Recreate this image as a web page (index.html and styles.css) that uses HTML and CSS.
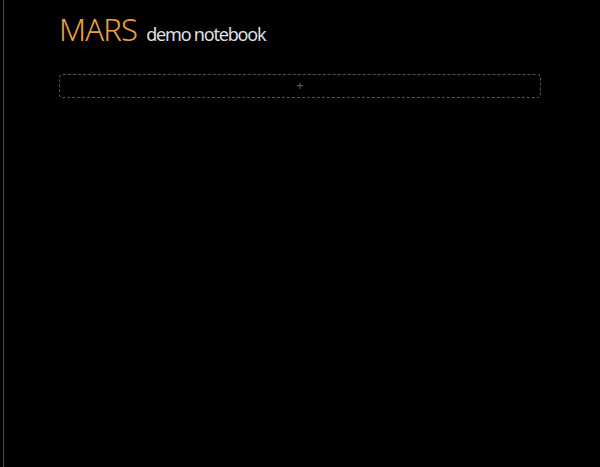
FILE: index.html
```html
<!DOCTYPE html>
<html>
<head>
<meta charset="utf-8">
<link rel="stylesheet" href="styles.css">
</head>
<body>
<div class="frame">
  <div class="page">
    <header class="title">
      <span class="brand">MARS</span>
      <span class="sub">demo notebook</span>
    </header>
    <div class="add-cell"><span class="plus">+</span></div>
  </div>
</div>
</body>
</html>
```
FILE: styles.css
```css
html, body {
  margin: 0;
  padding: 0;
  background: #000;
  height: 100%;
}
.frame {
  margin-left: 3px;
  border-left: 1px solid #4a4a4a;
  height: 100%;
  box-sizing: border-box;
}
.page {
  padding: 8px 0 0 55px;
  width: 482px;
  font-family: "Noto Sans", sans-serif;
}
.title {
  display: flex;
  align-items: baseline;
  gap: 9px;
  height: 44px;
}
.brand {
  font-size: 31px;
  color: #f2a03c;
  font-weight: 300;
  letter-spacing: -0.8px;
}
.sub {
  font-size: 18px;
  color: #e0e0e0;
  letter-spacing: -1.2px;
}
.add-cell {
  margin-top: 22px;
  height: 22px;
  border: 1px dashed #555;
  border-radius: 4px;
  display: flex;
  align-items: center;
  justify-content: center;
}
.plus {
  color: #666;
  font-size: 12px;
  line-height: 1;
}
```
